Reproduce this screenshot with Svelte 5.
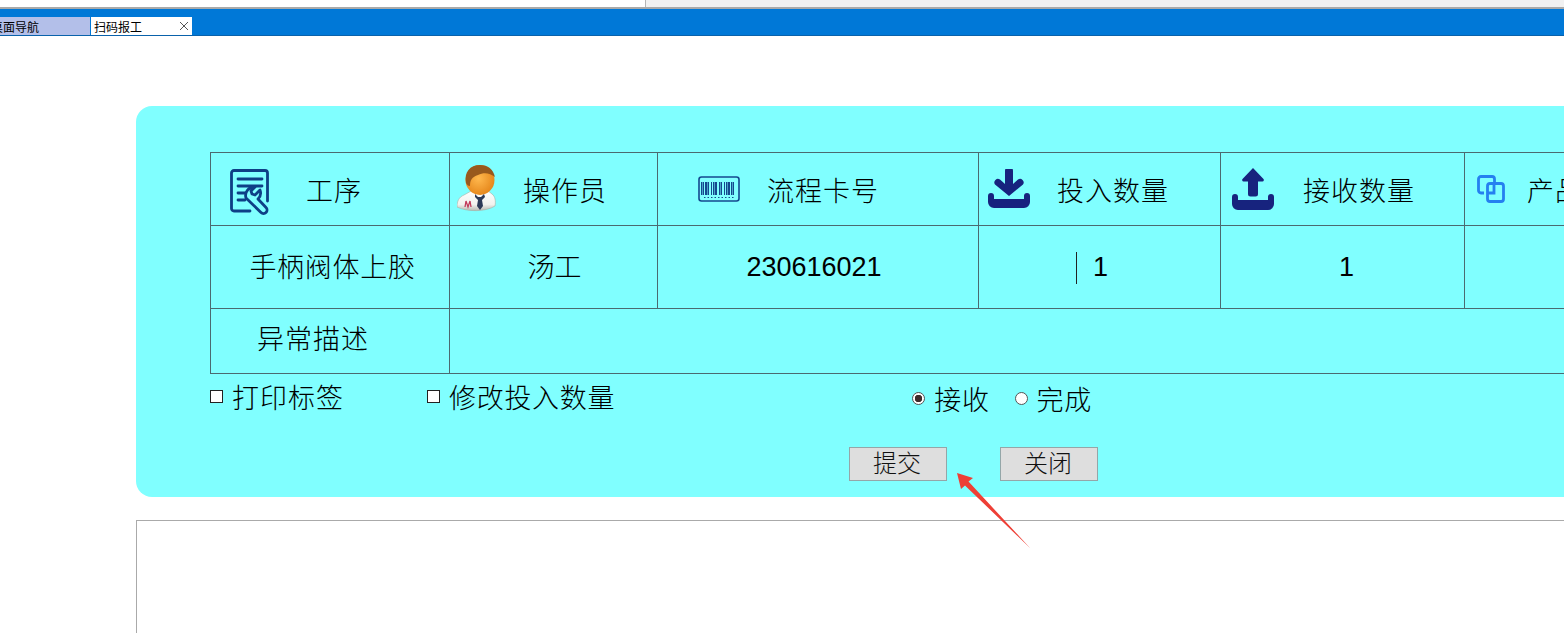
<script>
  const heads = [
    { icon: 'tool', label: '工序', pad: 19, gap: 34 },
    { icon: 'user', label: '操作员', pad: 7, gap: 26 },
    { icon: 'code', label: '流程卡号', pad: 40, gap: 27 },
    { icon: 'down', label: '投入数量', pad: 9, gap: 27 },
    { icon: 'up', label: '接收数量', pad: 11, gap: 29 },
    { icon: 'link', label: '产品', pad: 12, gap: 22 }
  ];
  const bars = [3, 5, 7, 8, 10, 13, 15, 17, 18, 21, 23, 26, 28, 30, 31, 33, 35];
</script>

<div class="page">
  <div class="top"><div class="top-right"></div></div>
  <div class="tabbar">
    <div class="tab off"><span>桌面导航</span></div>
    <div class="tab on">
      <span>扫码报工</span>
      <svg width="10" height="10" viewBox="0 0 10 10" stroke="#555" fill="none"><path d="M1 1l8 8M9 1l-8 8"/></svg>
    </div>
  </div>

  <div class="panel">
    <div class="grid">
      {#each heads as h (h.label)}
        <div class="cell head" style="padding-left:{h.pad}px;gap:{h.gap}px">
          {#if h.icon === 'tool'}
            <svg class="low" width="42" height="46" viewBox="0 0 42 46" fill="none" stroke="#0e3f86" stroke-width="2.800" stroke-linecap="round" stroke-linejoin="round">
              <path d="M20 42H4a2.500 2.500 0 0 1-2.500-2.500V4A2.500 2.500 0 0 1 4 1.500h31A2.500 2.500 0 0 1 37.500 4v28"/>
              <path d="M8 10h24M8 17h24M8 24h7M8 31h7"/>
              <path d="M25 18a8.500 8.500 0 0 0-9 11L31 43.500a3.500 3.500 0 0 0 5-5L28 30a8.500 8.500 0 0 0 2-9l-5 5-3-1-1-3z"/>
            </svg>
          {:else if h.icon === 'user'}
            <svg width="40" height="48" viewBox="0 0 40 48">
              <defs>
                <radialGradient id="face" cx="0.45" cy="0.45" r="0.7"><stop offset="0" stop-color="#ffb84e"/><stop offset="1" stop-color="#e07c10"/></radialGradient>
                <linearGradient id="coat" x1="0" y1="0" x2="0" y2="1"><stop offset="0" stop-color="#fff"/><stop offset="0.7" stop-color="#f2f2ee"/><stop offset="1" stop-color="#b9b9b2"/></linearGradient>
              </defs>
              <path d="M0 42c0-6 2-10 7-12l9-5h14l5 4c3 2 4 7 3 12-9 6-28 6-38 1z" fill="url(#coat)" stroke="#a8b0a4" stroke-width=".6"/>
              <ellipse cx="23" cy="15" rx="14.500" ry="15" fill="url(#face)"/>
              <path d="M9 18C7 7 13 0 23 0c8 0 13 4 15 12-5-4-11-5-17-2-6 2-8 5-8 11-2 0-3-1-4-3z" fill="#98591d"/>
              <path d="M18 29l3 3h3l3-3 1 3-3 3 1 6-3 4-3-4 1-6-3-3z" fill="#2c3a57"/>
              <path d="M8 42l1-6 2 6 2-6 1 6" fill="none" stroke="#c23a5a" stroke-width="1.300"/>
            </svg>
          {:else if h.icon === 'code'}
            <svg width="42" height="26" viewBox="0 0 42 26" fill="none">
              <rect x="1" y="1" width="40" height="24" rx="2.500" stroke="#14498f" stroke-width="1.600"/>
              {#each bars as b, i (b)}
                <rect x={b} y="6" width={i % 3 === 0 ? 1.500 : 1} height="13" fill="#14498f"/>
              {/each}
              <path d="M6 21.500h30" stroke="#14498f" stroke-dasharray="1.500 2"/>
            </svg>
          {:else if h.icon === 'down'}
            <svg width="42" height="40" viewBox="0 0 42 40" fill="#17237e">
              <path d="M17 2a4 4 0 0 1 8 0v13l5-4.500a3.600 3.600 0 0 1 5 5L21 27 7 15.500a3.600 3.600 0 0 1 5-5l5 4.500z"/>
              <path d="M0 27a3 3 0 0 1 6 0v3h30v-3a3 3 0 0 1 6 0v6a6 6 0 0 1-6 6H6a6 6 0 0 1-6-6z"/>
            </svg>
          {:else if h.icon === 'up'}
            <svg width="42" height="42" viewBox="0 0 42 42" fill="#17237e">
              <path d="M21 0l10.500 11a1.500 1.500 0 0 1-1 2.500H26V26a2.500 2.500 0 0 1-2.500 2.500h-5A2.500 2.500 0 0 1 16 26V13.500h-4.500a1.500 1.500 0 0 1-1-2.500z"/>
              <path d="M0 29a3 3 0 0 1 6 0v3h30v-3a3 3 0 0 1 6 0v7a6 6 0 0 1-6 6H6a6 6 0 0 1-6-6z"/>
            </svg>
          {:else}
            <svg width="28" height="28" viewBox="0 0 28 28" fill="none" stroke="#2580f0" stroke-width="2.800">
              <path d="M7 18H4a2.500 2.500 0 0 1-2.500-2.500V4A2.500 2.500 0 0 1 4 1.500h11A2.500 2.500 0 0 1 17.500 4v3"/>
              <path d="M13 8.500h11a2.500 2.500 0 0 1 2.500 2.500v13a2.500 2.500 0 0 1-2.500 2.500H13a2.500 2.500 0 0 1-2.500-2.500V11A2.500 2.500 0 0 1 13 8.500z"/>
              <path d="M11 18h6V9"/>
            </svg>
          {/if}
          <span class="cjk spaced">{h.label}</span>
        </div>
      {/each}

      <div class="cell val lift"><span class="cjk loose">手柄阀体上胶</span></div>
      <div class="cell val lift-s"><span class="cjk">汤工</span></div>
      <div class="cell val left-s"><span class="num">230616021</span></div>
      <div class="cell val right-s"><span class="caret"></span><span class="num">1</span></div>
      <div class="cell val shift"><span class="num">1</span></div>
      <div class="cell val"></div>

      <div class="cell note"><span class="cjk spaced">异常描述</span></div>
      <div class="cell wide"></div>
    </div>

    <div class="opts">
      <label class="opt"><input type="checkbox" /><span class="cjk spaced">打印标签</span></label>
      <label class="opt second"><input type="checkbox" /><span class="cjk loose">修改投入数量</span></label>
      <div class="radios">
        <label class="opt"><input type="radio" name="st" checked /><span class="cjk loose">接收</span></label>
        <label class="opt"><input type="radio" name="st" /><span class="cjk loose">完成</span></label>
      </div>
    </div>

    <div class="btns">
      <button>提交</button>
      <button>关闭</button>
    </div>
  </div>

  <div class="output"></div>

  <svg class="arrow" width="80" height="82" viewBox="0 0 80 82">
    <path d="M0 3L16 8L11.500 11.500L73 78L8 15.500L4 19z" fill="#ee3f36"/>
  </svg>
</div>

<style>
  :global(body) { margin: 0; background: #fff; }
  .page {
    position: relative; width: 1564px; height: 633px; overflow: hidden;
    background: #fff; font-family: "Liberation Sans", "Noto Sans CJK SC", sans-serif; color: #000;
  }
  .cjk { font-family: "Noto Sans CJK SC", sans-serif; font-weight: 300; font-size: 27px; line-height: 1; white-space: nowrap; }
  .spaced { letter-spacing: 1px; }
  .loose { letter-spacing: 0.7px; }
  .num { font-family: "Liberation Sans", sans-serif; font-size: 27px; line-height: 1; }

  .top { height: 7px; border-bottom: 2px solid #a9a9a9; display: flex; justify-content: flex-end; }
  .top-right { width: 918px; background: #f1f1f1; border-left: 1px solid #b5b5b5; }

  .tabbar {
    height: 26px; background: #0078d7; border-bottom: 1px solid #0a62ab;
    display: flex; align-items: flex-end; gap: 1px;
  }
  .tab { height: 18px; font-family: "Noto Sans CJK SC", sans-serif; font-size: 12px; line-height: 19px; overflow: hidden; white-space: nowrap; }
  .tab.off { width: 90px; background: #b3bfe9; }
  .tab.off span { margin-left: -9px; display: block; }
  .tab.on {
    width: 101px; background: #fff; padding: 0 3px; box-sizing: border-box;
    display: flex; justify-content: space-between; align-items: center;
  }

  .panel {
    margin: 70px 0 0 136px; width: 1500px; height: 391px; box-sizing: border-box;
    padding: 46px 0 0 74px; background: #80ffff; border-radius: 16px;
  }
  .grid {
    display: grid; width: 1426px;
    grid-template-columns: 239px 208px 321px 242px 244px 1fr;
    grid-template-rows: 73px 83px 65px;
    border-top: 1px solid #4b6a70; border-left: 1px solid #4b6a70;
  }
  .cell {
    border-right: 1px solid #4b6a70; border-bottom: 1px solid #4b6a70; box-sizing: border-box;
    display: flex; align-items: center; min-width: 0; overflow: hidden;
  }
  .low { margin-top: 5px; flex: none; }
  .val { justify-content: center; position: relative; }
  .note { padding: 0 0 8px 46px; }
  .wide { grid-column: 2 / -1; }
  .lift { padding: 0 0 4px 5px; }
  .lift-s { padding: 0 0 3px 2px; }
  .left-s { padding-right: 8px; }
  .right-s { padding-left: 2px; }
  .shift { padding-left: 8px; }
  .caret { position: absolute; left: 97px; top: 26px; width: 1px; height: 32px; background: #222; }

  .opts { display: flex; height: 50px; align-items: flex-start; padding-top: 9px; box-sizing: border-box; }
  .opt { display: flex; align-items: center; gap: 9px; }
  .second { margin-left: 83px; }
  .radios { display: flex; gap: 25px; margin-left: 297px; margin-top: 2px; }
  input {
    appearance: none; margin: 0; width: 13px; height: 13px; flex: none;
    border: 1px solid #222; background: #fff; box-sizing: border-box;
  }
  input[type="radio"] { border-radius: 50%; border-color: #555; }
  input[type="radio"]:checked { background: radial-gradient(circle, #3d2b2b 0 3.500px, #fff 4px); }

  .btns { display: flex; gap: 53px; margin: 23px 0 0 639px; }
  button {
    width: 98px; height: 34px; padding: 0 2px 5px 0; background: #dedede; border: 1px solid #94a6a8;
    font-family: "Noto Sans CJK SC", sans-serif; font-weight: 300; font-size: 24px; line-height: 1; color: #111;
  }

  .output {
    margin: 23px 0 0 136px; width: 1500px; height: 200px;
    border: 1px solid #aaa; box-sizing: border-box; background: #fff;
  }
  .arrow { position: absolute; left: 957px; top: 470px; }
</style>
